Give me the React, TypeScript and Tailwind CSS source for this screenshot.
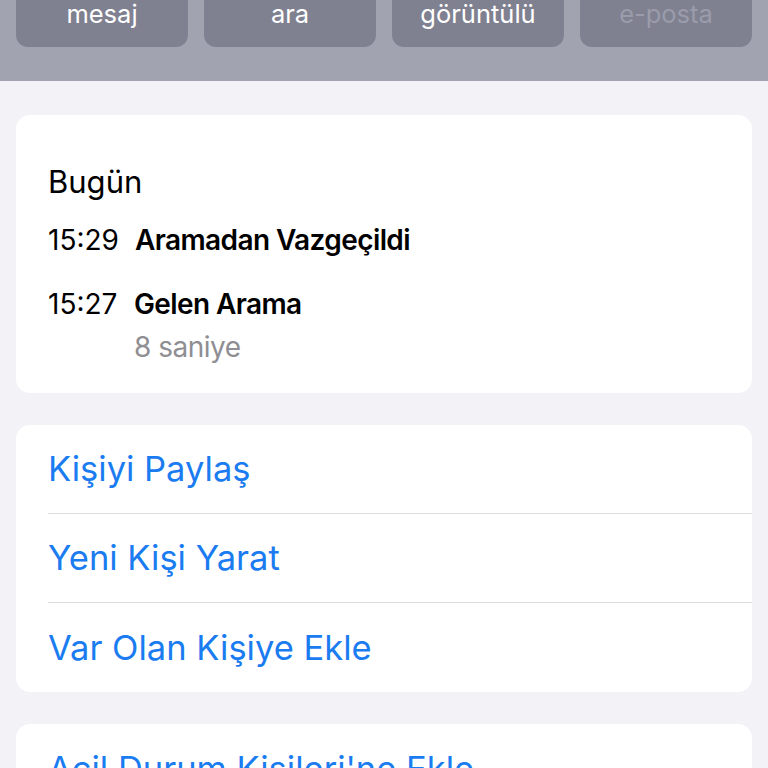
export default function App() {
  const actions = ["mesaj", "ara", "görüntülü", "e-posta"];
  const links = ["Kişiyi Paylaş", "Yeni Kişi Yarat", "Var Olan Kişiye Ekle"];

  return (
    <div className="w-[768px] h-[768px] overflow-hidden bg-[#f2f2f7] font-['Inter','Noto_Sans',sans-serif]">
      {/* Header with action buttons */}
      <div className="h-[81px] bg-[#a1a3b0] px-4 grid grid-cols-4 gap-4 items-start">
        {actions.map((a, i) => (
          <div
            key={a}
            className="h-[47px] rounded-b-[12px] bg-[#7f8190] flex justify-center pt-[1px]"
          >
            <span
              className={`text-[25.5px] leading-none ${
                i === 3 ? "text-[#9a9cab]" : "text-white"
              }`}
            >
              {a}
            </span>
          </div>
        ))}
      </div>

      <div className="px-4 pt-[34px] flex flex-col gap-8">
        {/* Recent calls */}
        <div className="bg-white rounded-[14px] h-[278px] px-8 pt-[48px]">
          <div className="text-[31px] leading-[38px] text-black">Bugün</div>
          <div className="mt-[22px] flex items-baseline text-[28px] leading-[34px] text-black">
            <span className="w-[87px]">15:29</span>
            <span className="font-semibold tracking-[-0.6px]">Aramadan Vazgeçildi</span>
          </div>
          <div className="mt-[30px] flex items-baseline text-[28px] leading-[34px] text-black">
            <span className="w-[86px]">15:27</span>
            <span className="font-semibold tracking-[-0.6px]">Gelen Arama</span>
          </div>
          <div className="pl-[86px] mt-[9px] text-[28px] leading-[34px] tracking-[-0.5px] text-[#8e8e93]">
            8 saniye
          </div>
        </div>

        {/* Contact actions */}
        <div className="bg-white rounded-[14px] overflow-hidden">
          {links.map((l, i) => (
            <div key={l} className="pl-8">
              <div
                className={`h-[89px] flex items-center text-[34.5px] text-[#1a7cf0] ${
                  i < links.length - 1 ? "border-b border-[#dcdce0]" : ""
                }`}
              >
                {l}
              </div>
            </div>
          ))}
        </div>

        <div className="bg-white rounded-[14px] pl-8">
          <div className="h-[89px] flex items-center text-[34.5px] text-[#1a7cf0]">
            Acil Durum Kişileri'ne Ekle
          </div>
        </div>
      </div>
    </div>
  );
}
